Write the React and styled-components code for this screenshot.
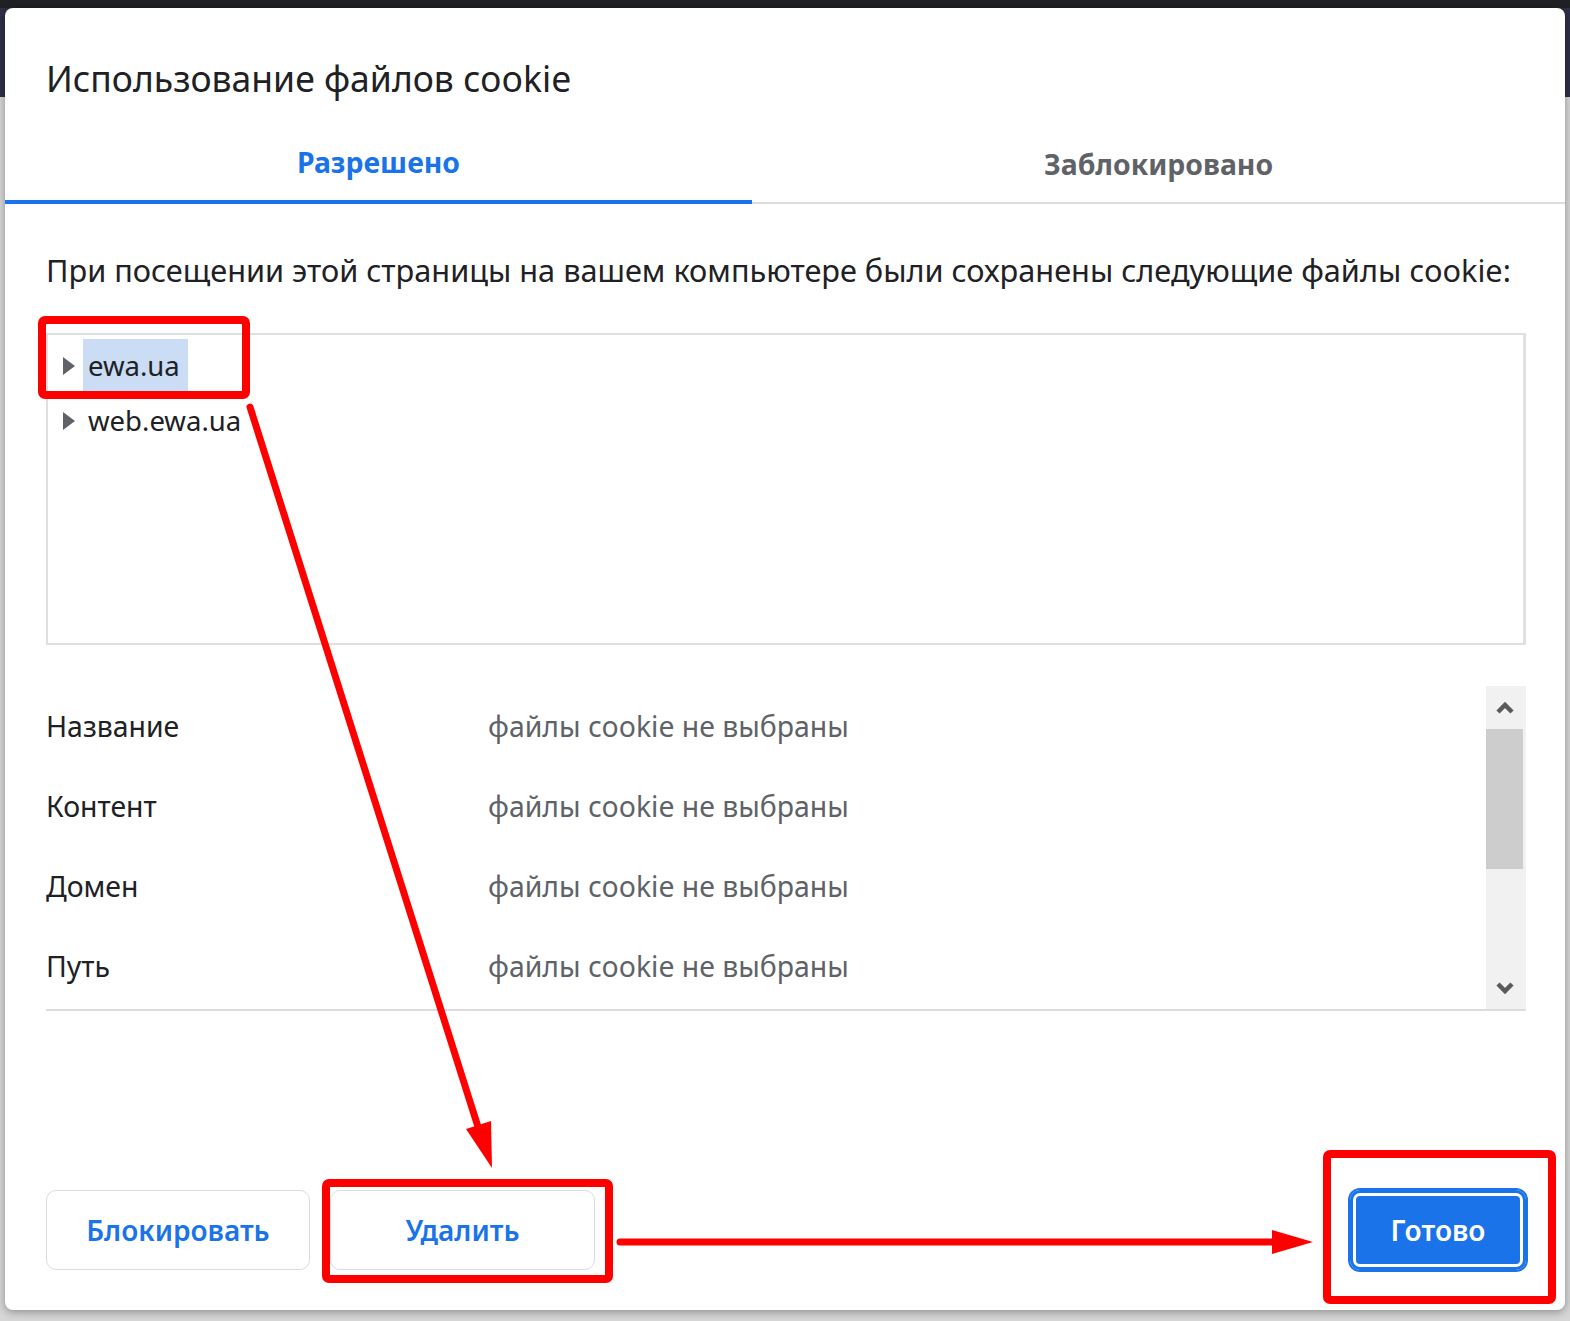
import React from 'react';
import styled, { createGlobalStyle } from 'styled-components';

const GlobalStyle = createGlobalStyle`
  html, body { margin: 0; padding: 0; }
  body {
    width: 1570px;
    height: 1321px;
    overflow: hidden;
    background: linear-gradient(to bottom, #202124 0, #202124 8px, #2f2f48 8px, #2f2f48 97px, #d6d6d6 97px);
    font-family: "Noto Sans", "Open Sans", sans-serif;
    color: #202124;
  }
`;

const Page = styled.div`
  position: relative;
  width: 1570px;
  height: 1321px;
  padding: 8px 0 0 5px;
  box-sizing: border-box;
`;

const Dialog = styled.div`
  width: 1560px;
  height: 1302px;
  background: #fff;
  border-radius: 8px;
  box-shadow: 0 2px 8px rgba(0, 0, 0, 0.35);
  display: flex;
  flex-direction: column;
  padding: 0 39px 0 41px;
  box-sizing: border-box;
`;

const Title = styled.h1`
  margin: 46px 0 0;
  font-size: 35.5px;
  font-weight: 400;
  line-height: 48px;
  color: #202124;
`;

const TabList = styled.div`
  display: flex;
  margin: 22px -39px 0 -41px;
  height: 80px;
`;

const Tab = styled.div`
  flex: 1 1 auto;
  display: flex;
  align-items: center;
  justify-content: center;
  box-sizing: border-box;
  font-size: 28.4px;
  font-weight: 700;
  color: ${p => (p.$active ? '#1a73e8' : '#5f6368')};
  border-bottom: ${p => (p.$active ? '4px solid #1a73e8' : '2px solid #dadce0')};
  padding-top: ${p => (p.$active ? '0' : '2px')};
`;

const Intro = styled.p`
  margin: 44px 0 0;
  font-size: 30.7px;
  line-height: 44px;
  color: #202124;
  white-space: nowrap;
`;

const TreeBox = styled.div`
  margin-top: 41px;
  height: 312px;
  padding-top: 3px;
  border: 2px solid #dfe0e3;
  border-right-width: 3px;
  box-sizing: border-box;
  display: flex;
  flex-direction: column;
`;

const TreeRow = styled.div`
  height: 55px;
  display: flex;
  align-items: center;
  padding-left: 14px;
`;

const Caret = styled.svg`
  width: 14px;
  height: 20px;
  flex: none;
  margin-right: 7px;
`;

const TreeLabel = styled.span`
  font-size: 27.5px;
  line-height: 53px;
  padding: 0 8px 0 5px;
  background: ${p => (p.$selected ? '#cbdcf5' : 'transparent')};
  color: #202124;
`;

const Details = styled.div`
  margin-top: 41px;
  height: 325px;
  display: flex;
  border-bottom: 2px solid #dadce0;
  box-sizing: border-box;
`;

const DetailList = styled.div`
  flex: 1;
  display: flex;
  flex-direction: column;
`;

const DetailRow = styled.div`
  height: 80px;
  display: flex;
  align-items: center;
  font-size: 28.4px;
`;

const DetailLabel = styled.span`
  width: 442px;
  flex: none;
  color: #202124;
`;

const DetailValue = styled.span`
  color: #5f6368;
`;

const Scrollbar = styled.div`
  width: 40px;
  flex: none;
  background: #f1f1f1;
  display: flex;
  flex-direction: column;
  align-items: stretch;
`;

const ScrollArrow = styled.div`
  height: 43px;
  display: flex;
  align-items: center;
  justify-content: center;
  padding-right: 3px;
`;

const ScrollThumb = styled.div`
  height: 140px;
  background: #cdcdcd;
  margin-right: 3px;
`;

const ScrollSpace = styled.div`
  flex: 1;
`;

const Footer = styled.div`
  margin-top: auto;
  padding-bottom: 40px;
  display: flex;
  align-items: center;
  gap: 20px;
`;

const Button = styled.button`
  height: 80px;
  width: ${p => p.$w}px;
  border-radius: 10px;
  font-family: inherit;
  font-size: 28px;
  font-weight: 600;
  cursor: pointer;
  border: ${p => (p.$primary ? 'none' : '1.5px solid #dadce0')};
  background: ${p => (p.$primary ? '#1a73e8' : '#fff')};
  color: ${p => (p.$primary ? '#fff' : '#1a73e8')};
  box-shadow: ${p =>
    p.$primary
      ? '0 0 0 2px #1a73e8, inset 0 0 0 3px #1a73e8, inset 0 0 0 6px #fff'
      : 'none'};
  margin-left: ${p => (p.$push ? 'auto' : '0')};
`;

const Overlay = styled.svg`
  position: absolute;
  left: 0;
  top: 0;
  width: 1570px;
  height: 1321px;
  pointer-events: none;
`;

const CaretIcon = () => (
  <Caret viewBox="0 0 14 20">
    <path d="M1 1 L13 10 L1 19 Z" fill="#5f6368" />
  </Caret>
);

const Chevron = ({ down }) => (
  <svg width="18" height="14" viewBox="0 0 18 14">
    <path
      d={down ? 'M2 3 L9 10 L16 3' : 'M2 11 L9 4 L16 11'}
      fill="none"
      stroke="#5a5a5a"
      strokeWidth="4.5"
      strokeLinejoin="miter"
    />
  </svg>
);

const details = ['Название', 'Контент', 'Домен', 'Путь'];

export default function App() {
  return (
    <>
      <GlobalStyle />
      <Page>
        <Dialog>
          <Title>Использование файлов cookie</Title>
          <TabList>
            <Tab $active>Разрешено</Tab>
            <Tab>Заблокировано</Tab>
          </TabList>
          <Intro>
            При посещении этой страницы на вашем компьютере были сохранены следующие файлы cookie:
          </Intro>
          <TreeBox>
            <TreeRow>
              <CaretIcon />
              <TreeLabel $selected>ewa.ua</TreeLabel>
            </TreeRow>
            <TreeRow>
              <CaretIcon />
              <TreeLabel>web.ewa.ua</TreeLabel>
            </TreeRow>
          </TreeBox>
          <Details>
            <DetailList>
              {details.map(d => (
                <DetailRow key={d}>
                  <DetailLabel>{d}</DetailLabel>
                  <DetailValue>файлы cookie не выбраны</DetailValue>
                </DetailRow>
              ))}
            </DetailList>
            <Scrollbar>
              <ScrollArrow>
                <Chevron />
              </ScrollArrow>
              <ScrollThumb />
              <ScrollSpace />
              <ScrollArrow>
                <Chevron down />
              </ScrollArrow>
            </Scrollbar>
          </Details>
          <Footer>
            <Button $w={264}>Блокировать</Button>
            <Button $w={265}>Удалить</Button>
            <Button $w={176} $primary $push>
              Готово
            </Button>
          </Footer>
        </Dialog>
        <Overlay viewBox="0 0 1570 1321">
          <g fill="none" stroke="#ff0000" strokeWidth="8">
            <rect x="42" y="320" width="204" height="75" rx="3" />
            <rect x="326" y="1183" width="283" height="96" rx="3" />
            <rect x="1327" y="1154" width="225" height="146" rx="3" />
          </g>
          <g stroke="#ff0000" strokeWidth="7" strokeLinecap="round">
            <line x1="250" y1="407" x2="479" y2="1130" />
            <line x1="620" y1="1242" x2="1276" y2="1242" />
          </g>
          <g fill="#ff0000">
            <polygon points="492,1168 491,1121 466,1129" />
            <polygon points="1313,1242 1272,1230 1272,1254" />
          </g>
        </Overlay>
      </Page>
    </>
  );
}
